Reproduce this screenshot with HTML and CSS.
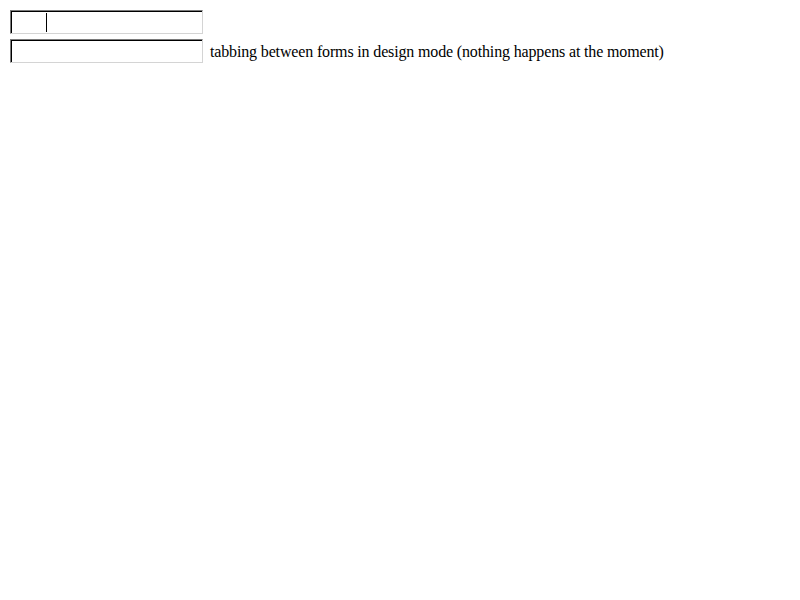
FILE: index.html
```html
<!DOCTYPE html>
<html>
<head>
<meta charset="utf-8">
<link rel="stylesheet" href="styles.css">
</head>
<body>
<div class="page">
  <div class="row">
    <div class="field"><span class="caret"></span></div>
  </div>
  <div class="row">
    <div class="field"></div>
    <span class="note">tabbing between forms in design mode (nothing happens at the moment)</span>
  </div>
</div>
</body>
</html>
```

FILE: styles.css
```css
html, body {
  margin: 0;
  padding: 0;
  background: #fff;
}
.page {
  padding: 10px 0 0 10px;
  display: flex;
  flex-direction: column;
  gap: 5px;
  font-family: "Liberation Serif", serif;
  font-size: 16px;
  color: #000;
}
.row {
  display: flex;
  align-items: flex-start;
  gap: 7px;
}
.field {
  box-sizing: border-box;
  width: 193px;
  height: 24px;
  border: 1px solid;
  border-color: #7a7a7a #d4d4d4 #d4d4d4 #7a7a7a;
  box-shadow: inset 1px 1px 0 #000;
  background: #fff;
  display: flex;
  padding: 2px 0 0 35px;
}
.caret {
  display: block;
  width: 1px;
  height: 19px;
  background: #000;
}
.note {
  padding-top: 4px;
  line-height: normal;
  white-space: nowrap;
  letter-spacing: -0.15px;
}
```
